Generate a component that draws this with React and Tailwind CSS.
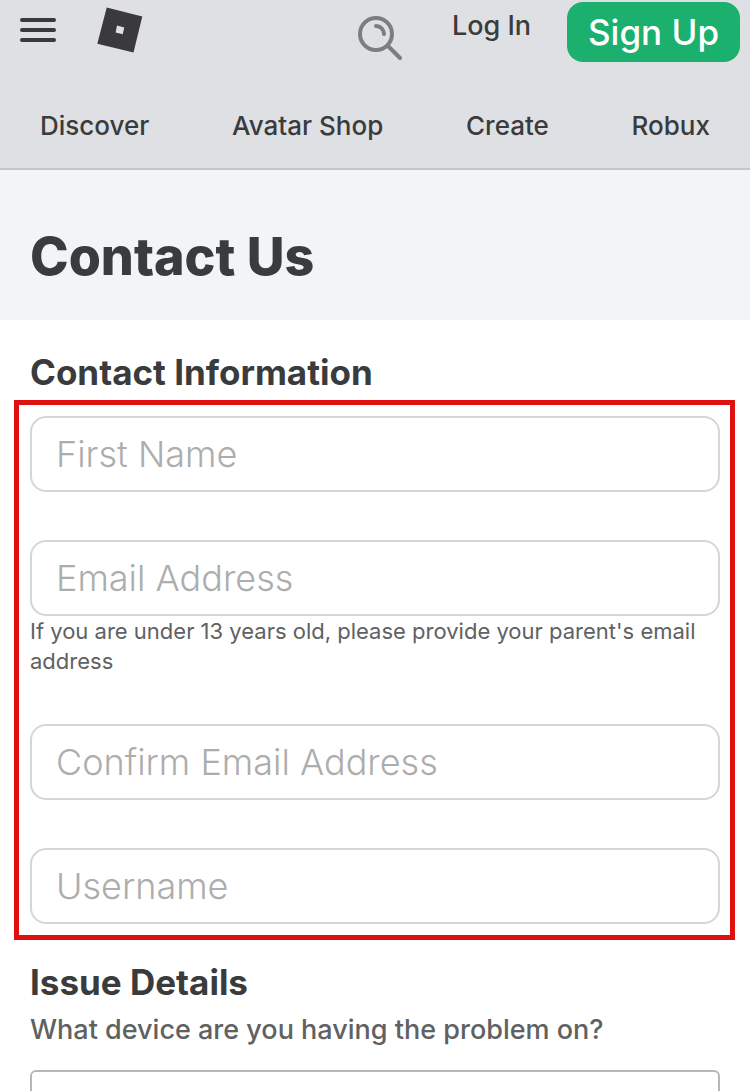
import React from "react";

const links = ["Discover", "Avatar Shop", "Create", "Robux"];

function Field({ id, label, type = "text", hint }) {
  return (
    <div>
      <input
        id={id}
        type={type}
        placeholder={label}
        aria-label={label}
        aria-describedby={hint ? id + "-hint" : undefined}
        className="block h-[76px] w-full rounded-[16px] border-2 border-[#d5d6d8] bg-white px-6 text-[36px] font-light text-[#393b3d] placeholder:text-[#adadad]"
      />
      {hint && (
        <p id={id + "-hint"} className="text-[22px] leading-[30px] text-[#606162]">{hint}</p>
      )}
    </div>
  );
}

export default function App() {
  return (
    <div className="h-screen overflow-y-auto bg-white font-['Inter',sans-serif] text-[#393b3d] [scrollbar-width:none]">
      <header className="border-b-2 border-[#c3c6ca] bg-[#dfe0e4]">
        <div className="flex h-[84px] items-start pr-[10px] pl-5">
          <button type="button" aria-label="Menu" className="mt-[18px]">
            <svg width="36" height="24" viewBox="0 0 36 24" fill="#393a3e" className="block">
              <rect width="36" height="4" rx="2" />
              <rect y="10" width="36" height="4" rx="2" />
              <rect y="20" width="36" height="4" rx="2" />
            </svg>
          </button>
          <a href="#home" aria-label="Home" className="mt-[7px] ml-[41px]">
            <svg width="46" height="46" viewBox="0 0 46 46" fill="#39393e" className="block">
              <path fillRule="evenodd" d="M9.7 .5 45.3 9.6 36.5 45.6 .3 36.7ZM20 18.6 18.6 25.5 25.7 27.2 27.3 20.4Z" />
            </svg>
          </a>
          <button type="button" aria-label="Search" className="mt-4 ml-auto">
            <svg width="44" height="44" viewBox="0 0 44 44" fill="none" stroke="#7c7d80" strokeWidth="4" strokeLinecap="round" className="block">
              <circle cx="18" cy="18" r="16" />
              <path d="M30 30 42 42" />
              <path d="M18 10C22.5 10.2 25.8 13.5 26 18" />
            </svg>
          </button>
          <a href="#login" className="mt-[10px] ml-[50px] text-[27px] leading-8 font-medium">Log In</a>
          <button type="button" className="mt-[2px] ml-9 h-[60px] w-[173px] rounded-[16px] bg-[#1bb06e] text-[35px] font-medium text-white">Sign Up</button>
        </div>
        <nav className="flex h-[84px] items-center justify-between px-10 pb-[2px] text-[26px] font-medium">
          {links.map((name) => (
            <a key={name} href="#nav">{name}</a>
          ))}
        </nav>
      </header>
      <div className="flex h-[150px] items-center bg-[#f2f4f6] px-[30px] pt-6">
        <h1 className="text-[52px] leading-[60px] font-extrabold">Contact Us</h1>
      </div>
      <main>
        <h2 className="px-[30px] pt-8 pb-2 text-[35px] leading-10 font-bold">Contact Information</h2>
        <div className="mr-[15px] ml-[14px] flex flex-col gap-12 border-[5px] border-[#e01010] py-[11px] pr-[10px] pl-[11px]">
          <Field id="first-name" label="First Name" />
          <Field
            id="email"
            type="email"
            label="Email Address"
            hint="If you are under 13 years old, please provide your parent's email address"
          />
          <Field id="confirm-email" type="email" label="Confirm Email Address" />
          <Field id="username" label="Username" />
        </div>
        <div className="px-[30px] pt-[22px] pb-8">
          <h2 className="text-[35px] leading-10 font-bold">Issue Details</h2>
          <label htmlFor="device" className="mt-3 block text-[27px] leading-8 font-medium text-[#606162]">
            What device are you having the problem on?
          </label>
          <select id="device" className="mt-6 block h-[76px] w-full appearance-none rounded-[6px] border-2 border-[#b8b8b8] bg-white px-6 text-[26px]">
            <option></option>
          </select>
        </div>
      </main>
    </div>
  );
}
